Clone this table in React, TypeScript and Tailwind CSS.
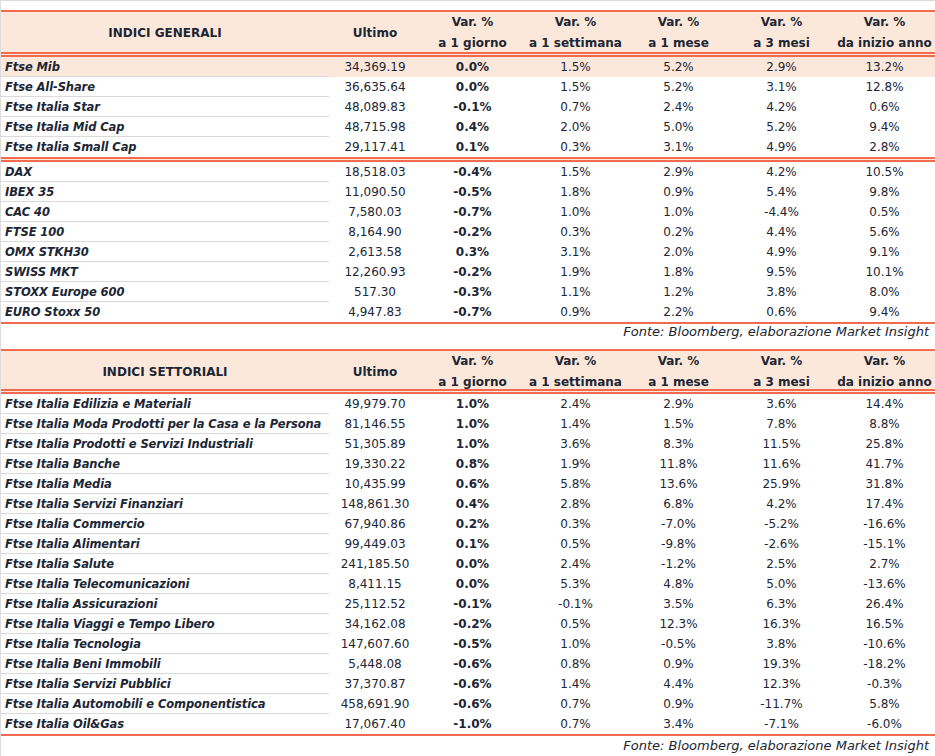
import React from "react"

type Row = [string, string, string, string, string, string, string]

const generali: Row[][] = [
  [
    ["Ftse Mib", "34,369.19", "0.0%", "1.5%", "5.2%", "2.9%", "13.2%"],
    ["Ftse All-Share", "36,635.64", "0.0%", "1.5%", "5.2%", "3.1%", "12.8%"],
    ["Ftse Italia Star", "48,089.83", "-0.1%", "0.7%", "2.4%", "4.2%", "0.6%"],
    ["Ftse Italia Mid Cap", "48,715.98", "0.4%", "2.0%", "5.0%", "5.2%", "9.4%"],
    ["Ftse Italia Small Cap", "29,117.41", "0.1%", "0.3%", "3.1%", "4.9%", "2.8%"],
  ],
  [
    ["DAX", "18,518.03", "-0.4%", "1.5%", "2.9%", "4.2%", "10.5%"],
    ["IBEX 35", "11,090.50", "-0.5%", "1.8%", "0.9%", "5.4%", "9.8%"],
    ["CAC 40", "7,580.03", "-0.7%", "1.0%", "1.0%", "-4.4%", "0.5%"],
    ["FTSE 100", "8,164.90", "-0.2%", "0.3%", "0.2%", "4.4%", "5.6%"],
    ["OMX STKH30", "2,613.58", "0.3%", "3.1%", "2.0%", "4.9%", "9.1%"],
    ["SWISS MKT", "12,260.93", "-0.2%", "1.9%", "1.8%", "9.5%", "10.1%"],
    ["STOXX Europe 600", "517.30", "-0.3%", "1.1%", "1.2%", "3.8%", "8.0%"],
    ["EURO Stoxx 50", "4,947.83", "-0.7%", "0.9%", "2.2%", "0.6%", "9.4%"],
  ],
]

const settoriali: Row[] = [
  ["Ftse Italia Edilizia e Materiali", "49,979.70", "1.0%", "2.4%", "2.9%", "3.6%", "14.4%"],
  ["Ftse Italia Moda Prodotti per la Casa e la Persona", "81,146.55", "1.0%", "1.4%", "1.5%", "7.8%", "8.8%"],
  ["Ftse Italia Prodotti e Servizi Industriali", "51,305.89", "1.0%", "3.6%", "8.3%", "11.5%", "25.8%"],
  ["Ftse Italia Banche", "19,330.22", "0.8%", "1.9%", "11.8%", "11.6%", "41.7%"],
  ["Ftse Italia Media", "10,435.99", "0.6%", "5.8%", "13.6%", "25.9%", "31.8%"],
  ["Ftse Italia Servizi Finanziari", "148,861.30", "0.4%", "2.8%", "6.8%", "4.2%", "17.4%"],
  ["Ftse Italia Commercio", "67,940.86", "0.2%", "0.3%", "-7.0%", "-5.2%", "-16.6%"],
  ["Ftse Italia Alimentari", "99,449.03", "0.1%", "0.5%", "-9.8%", "-2.6%", "-15.1%"],
  ["Ftse Italia Salute", "241,185.50", "0.0%", "2.4%", "-1.2%", "2.5%", "2.7%"],
  ["Ftse Italia Telecomunicazioni", "8,411.15", "0.0%", "5.3%", "4.8%", "5.0%", "-13.6%"],
  ["Ftse Italia Assicurazioni", "25,112.52", "-0.1%", "-0.1%", "3.5%", "6.3%", "26.4%"],
  ["Ftse Italia Viaggi e Tempo Libero", "34,162.08", "-0.2%", "0.5%", "12.3%", "16.3%", "16.5%"],
  ["Ftse Italia Tecnologia", "147,607.60", "-0.5%", "1.0%", "-0.5%", "3.8%", "-10.6%"],
  ["Ftse Italia Beni Immobili", "5,448.08", "-0.6%", "0.8%", "0.9%", "19.3%", "-18.2%"],
  ["Ftse Italia Servizi Pubblici", "37,370.87", "-0.6%", "1.4%", "4.4%", "12.3%", "-0.3%"],
  ["Ftse Italia Automobili e Componentistica", "458,691.90", "-0.6%", "0.7%", "0.9%", "-11.7%", "5.8%"],
  ["Ftse Italia Oil&Gas", "17,067.40", "-1.0%", "0.7%", "3.4%", "-7.1%", "-6.0%"],
]

const cols = "grid grid-cols-[328px_92px_103px_103px_103px_103px_103px]"

function Header({ title, tall }: { title: string; tall?: boolean }) {
  const periods = ["a 1 giorno", "a 1 settimana", "a 1 mese", "a 3 mesi", "da inizio anno"]
  return (
    <>
      <div className="h-[2px] bg-[#f26b4f]" />
      <div className={`${cols} ${tall ? "h-[40px]" : "h-[38px]"} bg-[#fce8da] items-center font-bold text-[12px] text-[#1c2634]`}>
        <div className="text-center">{title}</div>
        <div className="text-center">Ultimo</div>
        {periods.map((p) => (
          <div key={p} className="text-center leading-[21px]">
            <div>Var. %</div>
            <div>{p}</div>
          </div>
        ))}
      </div>
      <DoubleLine />
    </>
  )
}

function DoubleLine() {
  return <div className="h-[5px] border-y-2 border-[#f26b4f] bg-[#fce8da]" />
}

function DataRow({ row, highlight, last }: { row: Row; highlight?: boolean; last?: boolean }) {
  return (
    <div className={`${cols} h-5 text-[12px] text-[#1c2634] ${highlight ? "bg-[#fce8da]" : ""}`}>
      <div
        className={`flex items-center pl-1 pt-[2px] whitespace-nowrap text-[11.5px] tracking-[-0.1px] font-bold italic ${
          last ? "" : "border-b border-[#dadada]"
        }`}
      >
        {row[0]}
      </div>
      {row.slice(1).map((v, i) => (
        <div key={i} className={`flex items-center justify-center ${i === 1 ? "font-bold" : ""}`}>
          {v}
        </div>
      ))}
    </div>
  )
}

function Source({ h }: { h: string }) {
  return (
    <div className={`${h} flex items-center justify-end pr-[6px] italic text-[13px] text-[#1c2634] whitespace-nowrap`}>
      Fonte: Bloomberg, elaborazione Market Insight
    </div>
  )
}

export default function App() {
  return (
    <div className="w-[935px] h-[756px] bg-white border-l border-[#dcdcdc] font-['DejaVu_Sans',sans-serif] overflow-hidden">
      <div className="h-[1px] bg-[#dcdcdc]" />
      <div className="h-[9px]" />
      <Header title="INDICI GENERALI" tall />
      {generali[0].map((r, i) => (
        <DataRow key={r[0]} row={r} highlight={i === 0} last={i === generali[0].length - 1} />
      ))}
      <DoubleLine />
      {generali[1].map((r, i) => (
        <DataRow key={r[0]} row={r} last={i === generali[1].length - 1} />
      ))}
      <div className="h-[2px] bg-[#f26b4f]" />
      <Source h="h-[16px]" />
      <div className="h-[9px]" />
      <Header title="INDICI SETTORIALI" />
      {settoriali.map((r, i) => (
        <DataRow key={r[0]} row={r} last={i === settoriali.length - 1} />
      ))}
      <div className="h-[2px] bg-[#f26b4f]" />
      <Source h="h-[20px]" />
    </div>
  )
}
